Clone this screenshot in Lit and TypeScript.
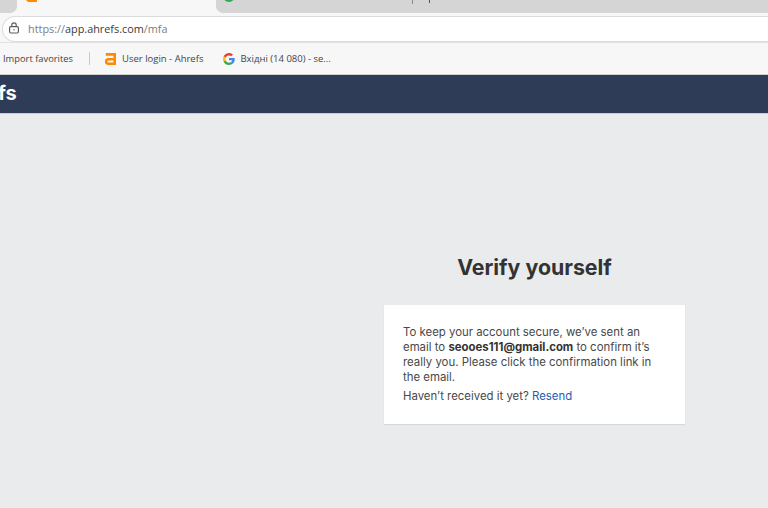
import { LitElement, html, css } from "lit";
import { customElement } from "lit/decorators.js";

const googleG = html`<svg class="fav g" viewBox="0 0 48 48" width="12" height="12">
  <path fill="#EA4335" d="M24 9.500c3.500 0 6.700 1.200 9.200 3.600l6.900-6.900C35.900 2.400 30.500 0 24 0 14.600 0 6.500 5.400 2.600 13.200l8 6.200C12.500 13.700 17.800 9.500 24 9.500z"/>
  <path fill="#4285F4" d="M46.900 24.500c0-1.600-.1-3.100-.4-4.500H24v9h12.900c-.6 3-2.200 5.500-4.700 7.200l7.700 6c4.500-4.200 7-10.300 7-17.700z"/>
  <path fill="#FBBC05" d="M10.500 28.600c-.5-1.400-.8-3-.8-4.600s.3-3.200.8-4.600l-8-6.200C.9 16.500 0 20.100 0 24s.9 7.500 2.600 10.800l7.900-6.200z"/>
  <path fill="#34A853" d="M24 48c6.500 0 11.900-2.100 15.900-5.800l-7.700-6c-2.100 1.400-4.900 2.300-8.200 2.300-6.200 0-11.500-4.200-13.400-9.900l-8 6.200C6.500 42.600 14.600 48 24 48z"/>
</svg>`;

const ahrefsA = html`<svg class="fav a" viewBox="0 0 11 12" width="11" height="12">
  <path fill="none" stroke="#ff8a00" stroke-width="2.600" d="M.8 1.400h8.900v9.300H3.300a2.100 2.100 0 0 1 0-4.400h6.400"/>
</svg>`;

@customElement("app-root")
export class AppRoot extends LitElement {
  static styles = css`
    :host {
      display: flex;
      flex-direction: column;
      width: 768px;
      height: 508px;
      overflow: hidden;
      background: #eaebed;
      font-family: Inter, "Liberation Sans", sans-serif;
    }
    .tabs {
      height: 13px;
      flex: none;
      display: flex;
      background: #f7f7f7;
      overflow: hidden;
    }
    .tab-gap {
      width: 17px;
      flex: none;
      background: #d5d5d5;
      border-bottom-right-radius: 7px;
    }
    .tab-active {
      width: 199px;
      flex: none;
      position: relative;
    }
    .tab-active svg { position: absolute; left: 9px; top: -10px; }
    .tab-rest {
      flex: 1;
      display: flex;
      background: #d5d5d5;
      border-bottom-left-radius: 7px;
    }
    .tab-next {
      width: 197px;
      flex: none;
      position: relative;
    }
    .tab-next svg { position: absolute; left: 7px; top: -10px; }
    .tab-next::after {
      content: "";
      position: absolute;
      right: 0;
      top: 0;
      width: 1px;
      height: 4px;
      background: #8c8c8c;
    }
    .tab-tick {
      width: 1px;
      height: 3px;
      margin-left: 16px;
      background: #555;
      flex: none;
    }
    .addr-row {
      flex: none;
      height: 30px;
      box-sizing: border-box;
      background: #f7f7f7;
      padding: 3px 0 0 2px;
      border-bottom: 1px solid #e2e2e2;
    }
    .addr {
      height: 26px;
      box-sizing: border-box;
      background: #fff;
      border: 1px solid #dcdcdc;
      border-right: 0;
      border-radius: 13px 0 0 13px;
      display: flex;
      align-items: center;
      padding: 0 0 2px 5px;
      gap: 8px;
      font: 10.850px "Open Sans", "Liberation Sans", sans-serif;
      color: #7c7c7c;
    }
    .addr b { font-weight: 400; color: #3a3a3a; }
    .bookmarks {
      flex: none;
      height: 32px;
      box-sizing: border-box;
      background: #f7f7f7;
      border-bottom: 1px solid #cfcfcf;
      display: flex;
      align-items: center;
      font: 9.500px "Open Sans", "Liberation Sans", sans-serif;
      color: #444;
      padding-left: 3px;
    }
    .import { font-size: 9.350px; }
    .sep {
      width: 1px;
      height: 13px;
      background: #c9c9c9;
      margin: 0 15px 0 16px;
    }
    .bm { display: flex; align-items: center; gap: 5px; }
    .bm.one { gap: 6px; margin-right: 20px; }
    .nav {
      flex: none;
      height: 39px;
      box-sizing: border-box;
      background: #2e3c58;
      border-bottom: 1px solid #c8ccd3;
      color: #fff;
      font: 700 20px/37px Inter, "Liberation Sans", sans-serif;
      overflow: hidden;
      text-indent: -2px;
    }
    .main {
      flex: 1;
      display: flex;
      flex-direction: column;
      align-items: flex-end;
      padding: 139px 83px 0 0;
    }
    h1 {
      margin: 0 0 24px;
      width: 301px;
      text-align: center;
      font: 700 21.300px/28px Inter, "Liberation Sans", sans-serif;
      color: #333;
    }
    .card {
      width: 301px;
      box-sizing: border-box;
      background: #fff;
      padding: 20px 19px;
      font-size: 11.400px;
      line-height: 15px;
      color: #484848;
      box-shadow: 0 1px 1px rgba(0,0,0,.08);
    }
    .card p { margin: 0; }
    .card p + p { margin-top: 4px; }
    .card strong { font-weight: 700; color: #333; }
    .card a { color: #1a5fb4; text-decoration: none; }
  `;

  render() {
    return html`
      <div class="tabs">
        <div class="tab-gap"></div>
        <div class="tab-active">${ahrefsA}</div>
        <div class="tab-rest">
          <div class="tab-next">${googleG}</div>
          <div class="tab-tick"></div>
        </div>
      </div>
      <div class="addr-row">
        <div class="addr">
          <svg viewBox="0 0 12 12" width="12" height="12" fill="none" stroke="#5f5f5f" stroke-width="1.200">
            <rect x="1.600" y="4.600" width="8.800" height="6.400" rx="1.200"/>
            <path d="M3.800 4.500V3a2.200 2.200 0 0 1 4.400 0v1.500"/>
            <circle cx="6" cy="7.800" r=".7" fill="#5f5f5f" stroke="none"/>
          </svg>
          <span>https://<b>app.ahrefs.com</b>/mfa</span>
        </div>
      </div>
      <div class="bookmarks">
        <span class="import">Import favorites</span>
        <div class="sep"></div>
        <div class="bm one">${ahrefsA}<span>User login - Ahrefs</span></div>
        <div class="bm">${googleG}<span>Вхідні (14 080) - se...</span></div>
      </div>
      <div class="nav">fs</div>
      <div class="main">
        <h1>Verify yourself</h1>
        <div class="card">
          <p>To keep your account secure, we’ve sent an email to <strong>seooes111@gmail.com</strong> to confirm it’s really you. Please click the confirmation link in the email.</p>
          <p>Haven’t received it yet? <a href="#">Resend</a></p>
        </div>
      </div>
    `;
  }
}
